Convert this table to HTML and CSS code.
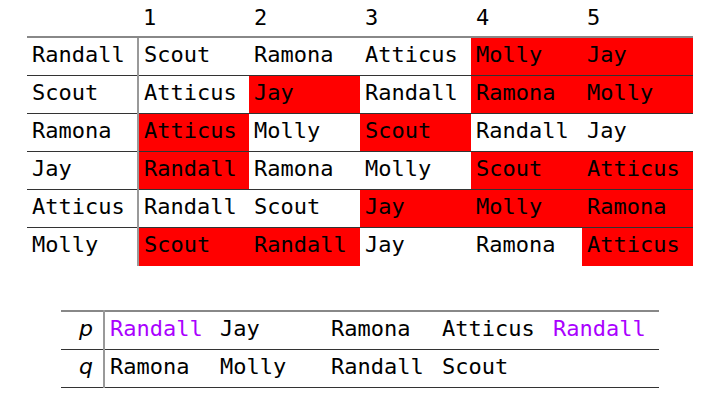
FILE: index.html
```html
<!DOCTYPE html>
<html>
<head>
<meta charset="utf-8">
<link rel="stylesheet" href="styles.css">
</head>
<body>
<table class="grid">
  <thead>
    <tr class="head"><th class="rh"></th><th>1</th><th>2</th><th>3</th><th>4</th><th>5</th></tr>
  </thead>
  <tbody>
    <tr><th class="rh">Randall</th><td>Scout</td><td>Ramona</td><td>Atticus</td><td class="hot">Molly</td><td class="hot">Jay</td></tr>
    <tr><th class="rh">Scout</th><td>Atticus</td><td class="hot">Jay</td><td>Randall</td><td class="hot">Ramona</td><td class="hot">Molly</td></tr>
    <tr><th class="rh">Ramona</th><td class="hot">Atticus</td><td>Molly</td><td class="hot">Scout</td><td>Randall</td><td>Jay</td></tr>
    <tr><th class="rh">Jay</th><td class="hot">Randall</td><td>Ramona</td><td>Molly</td><td class="hot">Scout</td><td class="hot">Atticus</td></tr>
    <tr><th class="rh">Atticus</th><td>Randall</td><td>Scout</td><td class="hot">Jay</td><td class="hot">Molly</td><td class="hot">Ramona</td></tr>
    <tr class="last"><th class="rh">Molly</th><td class="hot">Scout</td><td class="hot">Randall</td><td>Jay</td><td>Ramona</td><td class="hot">Atticus</td></tr>
  </tbody>
</table>

<table class="seq">
  <tbody>
    <tr><th class="var">p</th><td class="mark">Randall</td><td>Jay</td><td>Ramona</td><td>Atticus</td><td class="mark">Randall</td></tr>
    <tr><th class="var">q</th><td>Ramona</td><td>Molly</td><td>Randall</td><td>Scout</td><td></td></tr>
  </tbody>
</table>
</body>
</html>
```
FILE: styles.css
```css
html, body {
  margin: 0;
  padding: 0;
  background: #ffffff;
}

body {
  font-family: "DejaVu Sans Mono", monospace;
  font-size: 22px;
  color: #000000;
}

table {
  border-collapse: collapse;
  table-layout: fixed;
}

th, td {
  padding: 0 0 0 5px;
  text-align: left;
  font-weight: normal;
  white-space: nowrap;
  box-sizing: border-box;
}

.grid {
  margin-left: 27px;
  width: 666px;
}

.grid th, .grid td {
  width: 111px;
  height: 38px;
  line-height: 33px;
  padding-bottom: 4px;
  vertical-align: top;
  border-bottom: 1px solid #333333;
}

.grid .head th {
  height: 36px;
  line-height: 36px;
  padding-bottom: 0;
  border-bottom: 2px solid #888888;
}

.grid tbody .rh {
  border-right: 2px solid #999999;
}

.grid .last th, .grid .last td {
  border-bottom: none;
}

.grid .hot {
  background: #ff0000;
}

.seq {
  margin-top: 44px;
  margin-left: 61px;
  width: 598px;
  border-top: 2px solid #888888;
}

.seq th, .seq td {
  width: 111px;
  height: 38px;
  line-height: 33px;
  padding-bottom: 4px;
  vertical-align: top;
  border-bottom: 1px solid #333333;
}

.seq .var {
  width: 43px;
  padding: 0 0 4px 8px;
  text-align: center;
  font-family: "DejaVu Sans", sans-serif;
  font-style: italic;
  border-right: 2px solid #999999;
}

.seq .mark {
  color: #aa00ff;
}
```
